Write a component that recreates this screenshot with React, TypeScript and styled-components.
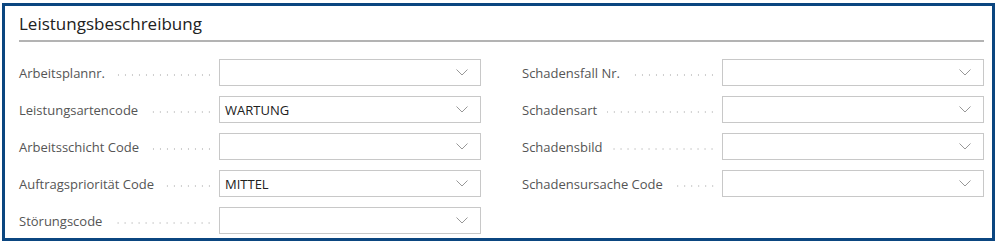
import styled, { createGlobalStyle } from "styled-components";

const GlobalStyle = createGlobalStyle`
  body {
    margin: 0;
    background: #fff;
    font-family: "Open Sans", "Noto Sans", sans-serif;
  }
`;

const Frame = styled.section`
  box-sizing: border-box;
  height: 238px;
  margin: 3px 4px 0 2px;
  border: 3px solid #0b4680;
  padding: 0 8px 0 14px;
`;

const Header = styled.h2`
  margin: 0;
  padding: 6px 0 4px;
  font-size: 17px;
  line-height: 24px;
  font-weight: 400;
  color: #212121;
  border-bottom: 2px solid #b3b3b3;
`;

const Columns = styled.div`
  display: grid;
  grid-template-columns: 1fr 1fr;
  column-gap: 41px;
  margin-top: 17px;
`;

const Column = styled.div`
  display: flex;
  flex-direction: column;
  gap: 10px;
`;

const Field = styled.div`
  display: grid;
  grid-template-columns: 200px 1fr;
  height: 27px;
  align-items: center;
`;

const Label = styled.label`
  display: flex;
  align-items: center;
  padding-right: 6px;
  font-size: 13px;
  color: #555;
  white-space: nowrap;
`;

const Leader = styled.span`
  flex: 1;
  height: 2px;
  margin: 5px 0 0 10px;
  background-image: radial-gradient(circle, #cdcdcd 0.9px, transparent 1.1px);
  background-size: 7px 2px;
  background-position: right center;
`;

const Select = styled.div`
  box-sizing: border-box;
  height: 27px;
  display: flex;
  align-items: center;
  justify-content: space-between;
  padding: 0 12px 0 5px;
  border: 1px solid #c8c8c8;
  background: #fff;
  font-size: 13px;
  color: #212121;
`;

const Chevron = () => (
  <svg width="12" height="7" viewBox="0 0 12 7">
    <path d="M0.5 0.5 L6 6 L11.5 0.5" fill="none" stroke="#8c8c8c" strokeWidth="0.9" />
  </svg>
);

type Item = { label: string; value?: string };

const left: Item[] = [
  { label: "Arbeitsplannr." },
  { label: "Leistungsartencode", value: "WARTUNG" },
  { label: "Arbeitsschicht Code" },
  { label: "Auftragspriorität Code", value: "MITTEL" },
  { label: "Störungscode" },
];

const right: Item[] = [
  { label: "Schadensfall Nr." },
  { label: "Schadensart" },
  { label: "Schadensbild" },
  { label: "Schadensursache Code" },
];

function Row({ label, value }: Item) {
  return (
    <Field>
      <Label>
        {label}
        <Leader />
      </Label>
      <Select>
        <span>{value ?? ""}</span>
        <Chevron />
      </Select>
    </Field>
  );
}

export default function App() {
  return (
    <>
      <GlobalStyle />
      <Frame>
        <Header>Leistungsbeschreibung</Header>
        <Columns>
          <Column>
            {left.map((f) => (
              <Row key={f.label} {...f} />
            ))}
          </Column>
          <Column>
            {right.map((f) => (
              <Row key={f.label} {...f} />
            ))}
          </Column>
        </Columns>
      </Frame>
    </>
  );
}
